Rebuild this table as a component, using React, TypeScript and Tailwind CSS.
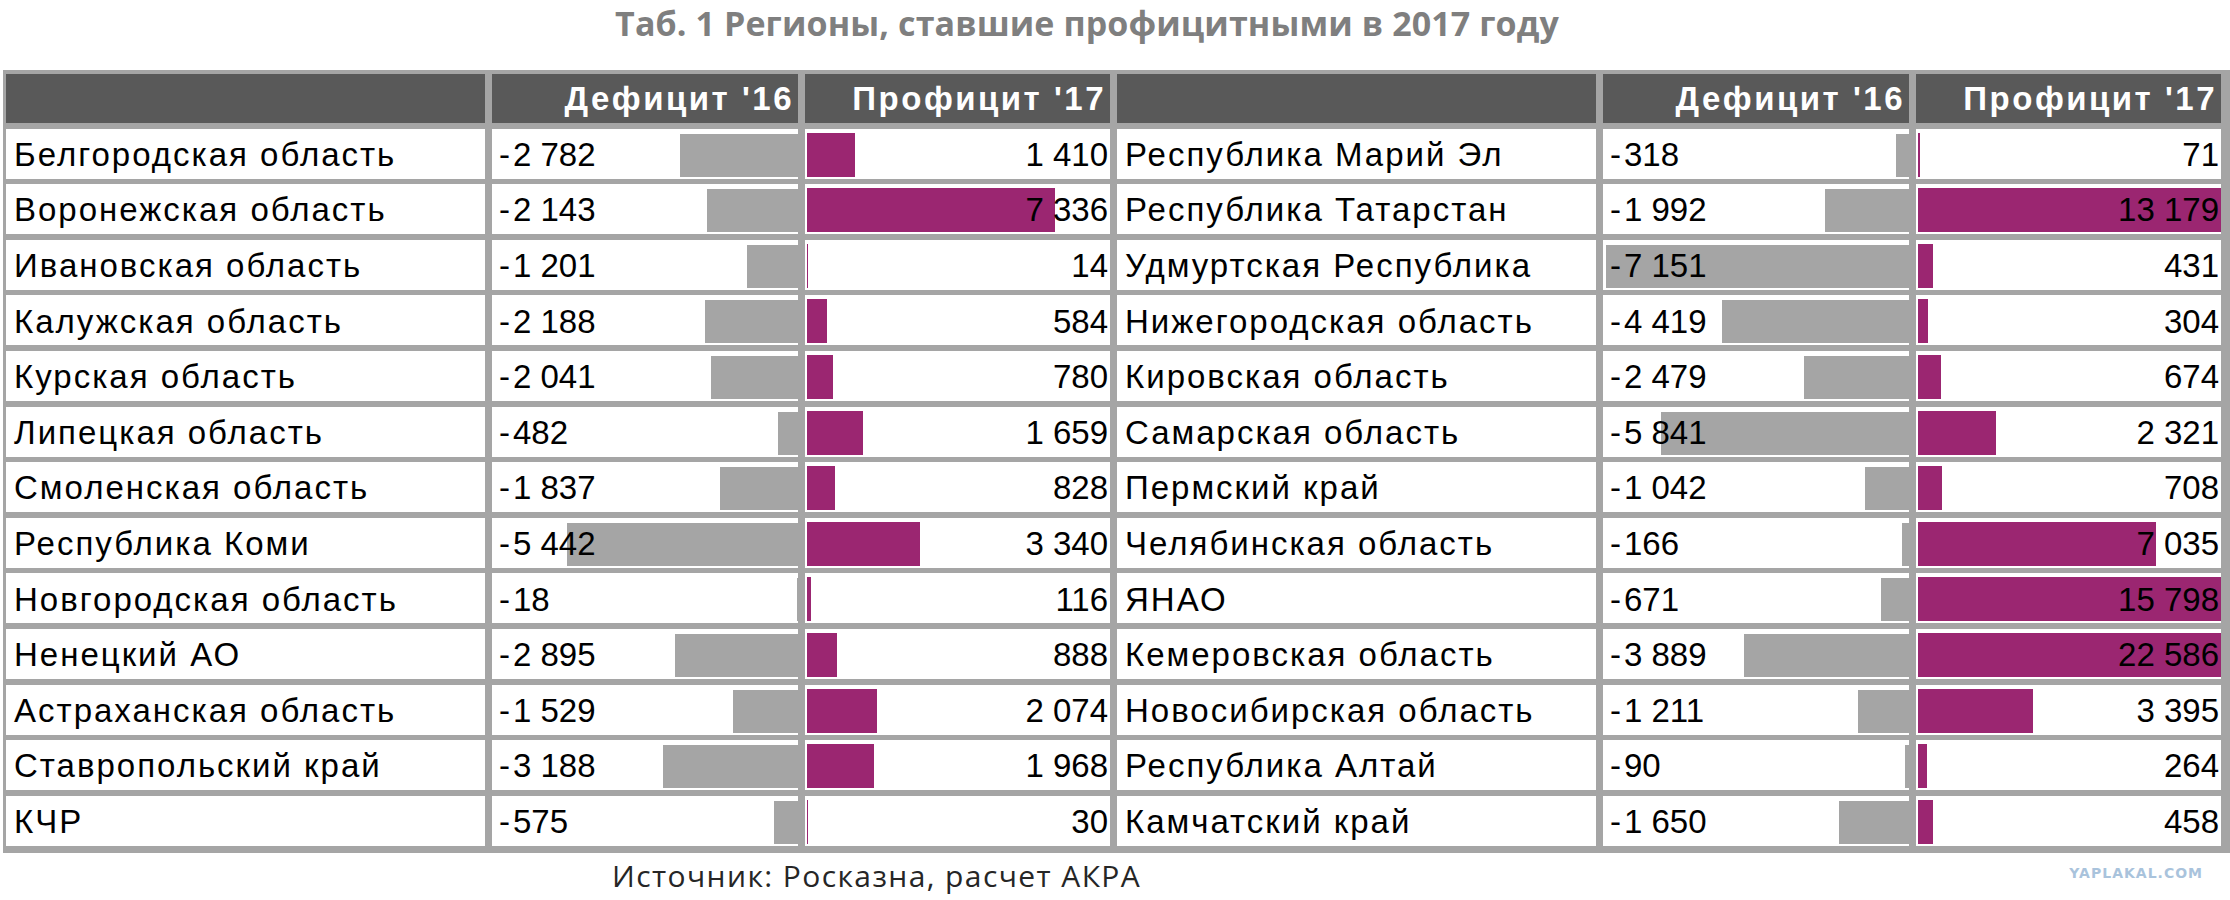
import React from 'react';

type Row = { name: string; def: string; pro: string };

const left: Row[] = [
  { name: 'Белгородская область', def: '-2 782', pro: '1 410' },
  { name: 'Воронежская область', def: '-2 143', pro: '7 336' },
  { name: 'Ивановская область', def: '-1 201', pro: '14' },
  { name: 'Калужская область', def: '-2 188', pro: '584' },
  { name: 'Курская область', def: '-2 041', pro: '780' },
  { name: 'Липецкая область', def: '-482', pro: '1 659' },
  { name: 'Смоленская область', def: '-1 837', pro: '828' },
  { name: 'Республика Коми', def: '-5 442', pro: '3 340' },
  { name: 'Новгородская область', def: '-18', pro: '116' },
  { name: 'Ненецкий АО', def: '-2 895', pro: '888' },
  { name: 'Астраханская область', def: '-1 529', pro: '2 074' },
  { name: 'Ставропольский край', def: '-3 188', pro: '1 968' },
  { name: 'КЧР', def: '-575', pro: '30' },
];

const right: Row[] = [
  { name: 'Республика Марий Эл', def: '-318', pro: '71' },
  { name: 'Республика Татарстан', def: '-1 992', pro: '13 179' },
  { name: 'Удмуртская Республика', def: '-7 151', pro: '431' },
  { name: 'Нижегородская область', def: '-4 419', pro: '304' },
  { name: 'Кировская область', def: '-2 479', pro: '674' },
  { name: 'Самарская область', def: '-5 841', pro: '2 321' },
  { name: 'Пермский край', def: '-1 042', pro: '708' },
  { name: 'Челябинская область', def: '-166', pro: '7 035' },
  { name: 'ЯНАО', def: '-671', pro: '15 798' },
  { name: 'Кемеровская область', def: '-3 889', pro: '22 586' },
  { name: 'Новосибирская область', def: '-1 211', pro: '3 395' },
  { name: 'Республика Алтай', def: '-90', pro: '264' },
  { name: 'Камчатский край', def: '-1 650', pro: '458' },
];

const num = (s: string) => Math.abs(parseInt(s.replace(/\s/g, ''), 10));

// excel data bars: px per unit, clipped at cell width
const DEF_SCALE = 0.0424;
const PRO_SCALE = 0.0338;

const NameCell = ({ text }: { text: string }) => (
  <div className="h-[50px] bg-white flex items-center pl-[8px] pt-[2px] text-[33px] tracking-[2px] text-black whitespace-nowrap overflow-hidden">
    {text}
  </div>
);

const DefCell = ({ value }: { value: string }) => {
  const w = Math.min(num(value) * DEF_SCALE, 306);
  return (
    <div className="relative h-[50px] bg-white flex items-center pl-[7px] pt-[2px] text-[33px] text-black whitespace-nowrap">
      <div className="absolute right-0 top-[5px] bottom-[2px] bg-[#a5a5a5]" style={{ width: w }} />
      <span className="relative">
        <span className="mr-[3px]">-</span>
        {value.slice(1)}
      </span>
    </div>
  );
};

const ProCell = ({ value }: { value: string }) => {
  const w = Math.min(num(value) * PRO_SCALE, 303);
  return (
    <div className="relative h-[50px] bg-white flex items-center justify-end pr-[2px] pt-[2px] text-[33px] text-black whitespace-nowrap">
      <div className="absolute left-[2px] top-[4px] bottom-[2px] bg-[#9b2671]" style={{ width: w }} />
      <span className="relative">{value}</span>
    </div>
  );
};

const HeadCell = ({ text }: { text?: string }) => (
  <div className="h-[49px] bg-[#595959] flex items-center justify-end pr-[4px] text-[33px] font-bold tracking-[2.5px] text-white whitespace-nowrap">
    {text}
  </div>
);

export default function App() {
  return (
    <div className="w-[2230px] h-[900px] bg-white overflow-hidden font-['Liberation_Sans',Arial,sans-serif]">
      <div className="h-[70px] pr-[56px] text-center font-['Open_Sans',sans-serif] font-bold text-[34px] leading-[47px] tracking-[0.1px] text-[#7f7f7f]">
        Таб. 1 Регионы, ставшие профицитными в 2017 году
      </div>

      <div className="ml-[3px] bg-[#a5a5a5] pl-[3px] pt-[4px] pb-[7px]">
        <div className="grid grid-cols-[479px_306px_305px_479px_306px_305px] gap-x-[7px] gap-y-[5.6px]">
          <HeadCell />
          <HeadCell text="Дефицит '16" />
          <HeadCell text="Профицит '17" />
          <HeadCell />
          <HeadCell text="Дефицит '16" />
          <HeadCell text="Профицит '17" />
          {left.map((l, i) => {
            const r = right[i];
            return (
              <React.Fragment key={l.name}>
                <NameCell text={l.name} />
                <DefCell value={l.def} />
                <ProCell value={l.pro} />
                <NameCell text={r.name} />
                <DefCell value={r.def} />
                <ProCell value={r.pro} />
              </React.Fragment>
            );
          })}
        </div>
      </div>

      <div className="flex items-start pl-[612px] pt-[3px]">
        <div className="font-['Open_Sans',sans-serif] text-[30px] leading-[40px] tracking-[1.4px] text-[#262626]">
          Источник: Росказна, расчет АКРА
        </div>
        <div className="ml-auto mr-[27px] mt-[10px] font-['DejaVu_Sans',sans-serif] font-bold text-[14px] leading-[14px] tracking-[1px] text-[#a9c3dc]">
          YAPLAKAL.COM
        </div>
      </div>
    </div>
  );
}
